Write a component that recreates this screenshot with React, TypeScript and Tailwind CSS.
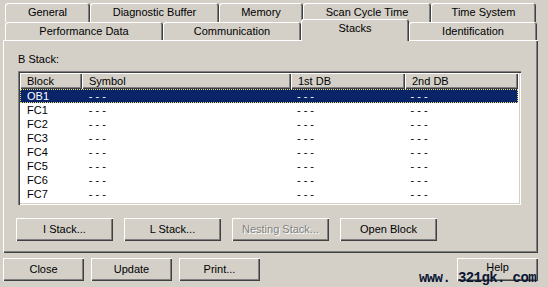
const raised = 'shadow-[inset_1px_1px_0_#fff,inset_-1px_-1px_0_#404040,inset_-2px_-2px_0_#808080]';
const tabEdge = 'shadow-[inset_1px_1px_0_#fff,inset_-1px_0_0_#404040,inset_-2px_0_0_#808080]';

const row1 = [
  { label: 'General', w: 'w-[85px]' },
  { label: 'Diagnostic Buffer', w: 'w-[129px]' },
  { label: 'Memory', w: 'w-[84px]' },
  { label: 'Scan Cycle Time', w: 'w-[128px]' },
  { label: 'Time System', w: 'w-[105px]' },
];

const row2 = [
  { label: 'Performance Data', w: 'w-[158px]' },
  { label: 'Communication', w: 'w-[138px]' },
  { label: 'Stacks', w: 'w-[108px]', selected: true },
  { label: 'Identification', w: 'w-[128px]' },
];

const columns = [
  { label: 'Block', w: 'w-[62px]' },
  { label: 'Symbol', w: 'w-[209px]' },
  { label: '1st DB', w: 'w-[114px]' },
  { label: '2nd DB', w: 'w-[113px]' },
];

const blocks = ['OB1', 'FC1', 'FC2', 'FC3', 'FC4', 'FC5', 'FC6', 'FC7'];

function Tab({ label, w, selected }: { label: string; w: string; selected?: boolean }) {
  if (selected) {
    return (
      <div
        className={`${w} relative z-10 h-[22px] mb-[-1px] flex justify-center pt-[3px] rounded-t-[3px] bg-[#d4d0c8] ${tabEdge}`}
      >
        {label}
      </div>
    );
  }
  return (
    <div className={`${w} h-full flex items-center justify-center rounded-t-[3px] bg-[#d4d0c8] ${tabEdge}`}>
      {label}
    </div>
  );
}

function Button({ label, w, disabled }: { label: string; w: string; disabled?: boolean }) {
  return (
    <div className={`${w} h-[23px] flex items-center justify-center bg-[#d4d0c8] ${raised}`}>
      {disabled ? (
        <span className="text-[#808080] [text-shadow:1px_1px_0_#fff]">{label}</span>
      ) : (
        label
      )}
    </div>
  );
}

export default function App() {
  return (
    <div
      className="relative w-[548px] h-[287px] overflow-hidden bg-[#d4d0c8] text-black text-[11px] leading-[13px]"
      style={{ fontFamily: '"Liberation Sans", Arial, sans-serif' }}
    >
      <div className="pt-[3px]">
        <div className="flex ml-[5px] h-[19px]">
          {row1.map((t) => (
            <Tab key={t.label} {...t} />
          ))}
        </div>
        <div className="flex items-end ml-[5px] h-[18px]">
          {row2.map((t) => (
            <Tab key={t.label} {...t} />
          ))}
        </div>
      </div>

      <div className={`ml-[3px] w-[535px] h-[213px] pt-[13px] ${raised}`}>
        <div className="ml-[15px]">B Stack:</div>

        <div className="ml-[15px] mt-[5px] w-[503px] h-[134px] bg-white p-[2px] shadow-[inset_1px_1px_0_#808080,inset_2px_2px_0_#404040,inset_-1px_-1px_0_#fff,inset_-2px_-2px_0_#d4d0c8]">
          <div className="flex h-[16px]">
            {columns.map((c) => (
              <div key={c.label} className={`${c.w} flex items-center pl-[7px] bg-[#d4d0c8] ${raised}`}>
                {c.label}
              </div>
            ))}
          </div>
          {blocks.map((b, i) => {
            const sel = i === 0;
            return (
              <div
                key={b}
                className={`flex w-[498px] h-[14px] items-center ${
                  sel ? 'bg-[#0a246a] text-white border border-dotted border-[#e8d870]' : 'border border-transparent'
                }`}
              >
                {[b, '- - -', '- - -', '- - -'].map((v, j) => (
                  <div key={j} className={`${columns[j].w} pl-[6px]`}>
                    {v}
                  </div>
                ))}
              </div>
            );
          })}
        </div>

        <div className="flex gap-[11px] ml-[13px] mt-[13px]">
          <Button label="I Stack..." w="w-[97px]" />
          <Button label="L Stack..." w="w-[97px]" />
          <Button label="Nesting Stack..." w="w-[97px]" disabled />
          <Button label="Open Block" w="w-[97px]" />
        </div>
      </div>

      <div className="flex mt-[5px] ml-[3px] mr-[10px] gap-[7px]">
        <Button label="Close" w="w-[81px]" />
        <Button label="Update" w="w-[81px]" />
        <Button label="Print..." w="w-[81px]" />
        {/* help button is half covered by the watermark in the capture */}
        <div className={`ml-auto w-[81px] h-[23px] flex justify-center pt-[3px] bg-[#d4d0c8] ${raised}`}>
          Help
        </div>
      </div>

      <div
        className="absolute left-[419px] top-[271px] text-[14px] leading-[14px] tracking-[-0.6px] font-bold text-[#0b1633] whitespace-pre"
        style={{ fontFamily: '"Liberation Mono", "Courier New", monospace' }}
      >
        www. 321gk. com
      </div>
    </div>
  );
}
